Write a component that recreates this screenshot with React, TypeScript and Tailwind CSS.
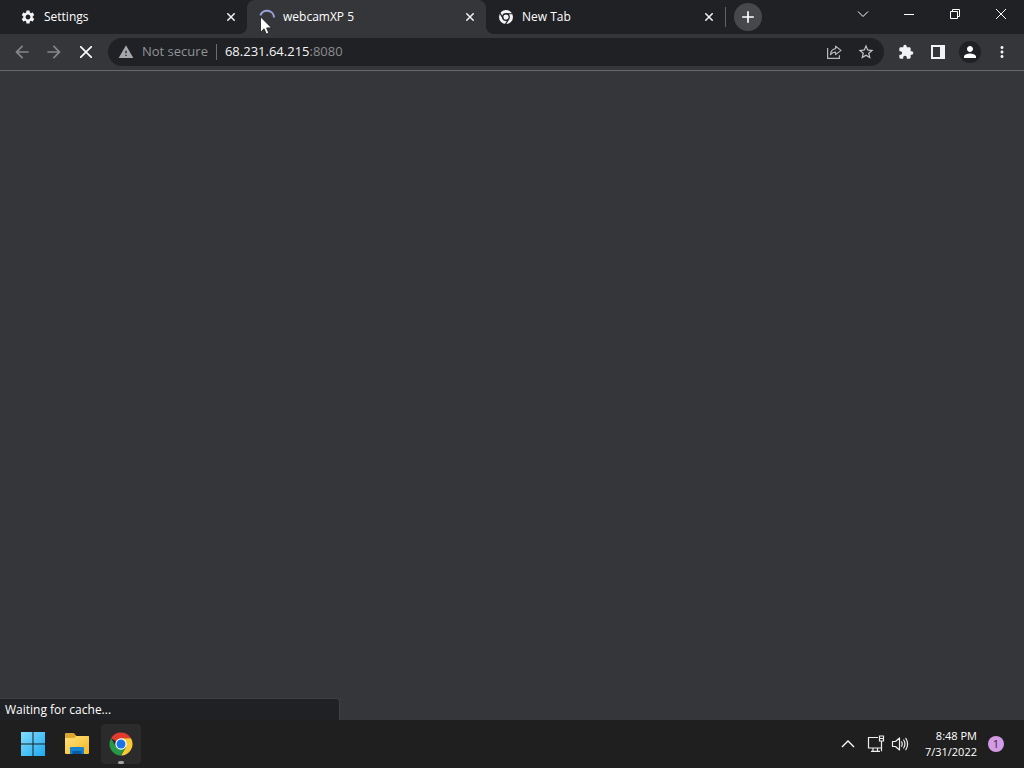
import type { ReactNode } from "react";
import {
  MdAdd,
  MdArrowBack,
  MdArrowForward,
  MdExtension,
  MdMoreVert,
  MdPerson,
  MdSettings,
  MdStarBorder,
  MdWarning,
} from "react-icons/md";

function ChromeMono() {
  return (
    <svg viewBox="0 0 24 24" className="size-4" aria-hidden="true">
      <circle cx="12" cy="12" r="10.5" fill="#f1f3f4" />
      <circle cx="12" cy="12" r="4.900" fill="none" stroke="#202124" strokeWidth="2" />
      <path
        d="M12 7.100h10M7.800 14.500 2.800 5.800M16.200 14.500l-5 8.600"
        stroke="#202124"
        strokeWidth="1.8"
        fill="none"
      />
    </svg>
  );
}

function Spinner() {
  return (
    <svg viewBox="0 0 16 16" className="size-4" aria-hidden="true">
      <path d="M1.400 6.400A7 7 0 0 1 15 8.600" fill="none" stroke="#9ba3dc" strokeWidth="2" />
    </svg>
  );
}

function Tab({ title, icon, active = false }: { title: string; icon: ReactNode; active?: boolean }) {
  return (
    <div
      className={
        active
          ? "relative z-10 flex h-full w-[239px] shrink-0 items-center gap-2 rounded-t-lg bg-[#35363a] pr-2 pl-3"
          : "flex h-full w-[239px] shrink-0 items-center gap-2 pr-2 pl-3"
      }
    >
      {active && (
        <>
          <span className="absolute bottom-0 -left-2 size-2 bg-[radial-gradient(circle_at_0_0,#202124_8px,#35363a_8px)]" />
          <span className="absolute -right-2 bottom-0 size-2 bg-[radial-gradient(circle_at_100%_0,#202124_8px,#35363a_8px)]" />
        </>
      )}
      <span className="flex size-4 items-center justify-center text-[#f1f3f4]">{icon}</span>
      <span className="flex-1 truncate text-xs">{title}</span>
      <button type="button" aria-label={`Close ${title}`} className="flex size-4 items-center justify-center">
        <svg viewBox="0 0 8 8" className="size-2" aria-hidden="true">
          <path d="m.3.3 7.400 7.400M7.700.3.3 7.700" stroke="#f1f3f4" strokeWidth="1.5" />
        </svg>
      </button>
    </div>
  );
}

function WindowButton({ label, children }: { label: string; children: ReactNode }) {
  return (
    <button type="button" aria-label={label} className="flex h-7 w-[46px] items-center justify-center">
      <svg viewBox="0 0 12 12" className="size-3" fill="none" stroke="#fff" strokeWidth="1" aria-hidden="true">
        {children}
      </svg>
    </button>
  );
}

function ToolButton({ label, children }: { label: string; children: ReactNode }) {
  return (
    <button type="button" aria-label={label} className="flex size-7 shrink-0 items-center justify-center">
      {children}
    </button>
  );
}

function TabStrip() {
  return (
    <header className="flex h-[34px] bg-[#202124] pl-2">
      <Tab title="Settings" icon={<MdSettings className="size-4" />} />
      <Tab title="webcamXP 5" icon={<Spinner />} active />
      <Tab title="New Tab" icon={<ChromeMono />} />
      <div className="flex items-center gap-2">
        <span className="h-5 w-px bg-[#5f6368]" />
        <button
          type="button"
          aria-label="New tab"
          className="flex size-7 items-center justify-center rounded-full bg-[#47484b]"
        >
          <MdAdd className="size-5" />
        </button>
      </div>
      <div className="ml-auto flex">
        <WindowButton label="Search tabs">
          <path d="m1 3.500 5 5 5-5" />
        </WindowButton>
        <WindowButton label="Minimize">
          <path d="M1 6.500h10" />
        </WindowButton>
        <WindowButton label="Restore">
          <path d="M1.500 3.500h7v7h-7zM3.500 3.500v-2h7v7h-2" />
        </WindowButton>
        <WindowButton label="Close">
          <path d="m1 1 10 10M11 1 1 11" />
        </WindowButton>
      </div>
    </header>
  );
}

function Toolbar() {
  return (
    <nav className="flex h-[37px] items-center border-b border-[#67686b] bg-[#35363a] pr-2 pl-2">
      <div className="flex gap-1">
        <ToolButton label="Back">
          <MdArrowBack className="size-5 text-[#85868a]" />
        </ToolButton>
        <ToolButton label="Forward">
          <MdArrowForward className="size-5 text-[#85868a]" />
        </ToolButton>
        <ToolButton label="Stop loading">
          <svg viewBox="0 0 12 12" className="size-3 text-white" aria-hidden="true">
            <path d="m0 0 12 12M12 0 0 12" stroke="currentColor" strokeWidth="1.6" />
          </svg>
        </ToolButton>
      </div>
      <div className="ml-2 flex h-7 flex-1 items-center rounded-full bg-[#202124] pr-1 pl-[10px] text-[13px]">
        <MdWarning className="size-4 text-[#a4a7ab]" />
        <span className="ml-2 text-[#909398]">Not secure</span>
        <span className="mx-2 h-4 w-px bg-[#6b6d71]" />
        <a href="http://68.231.64.215:8080" className="text-[#8b8d91]">
          <span className="text-[#f4f5f6]">68.231.64.215</span>:8080
        </a>
        <div className="ml-auto flex gap-1">
          <ToolButton label="Share this page">
            <svg viewBox="0 0 16 16" className="size-4" fill="none" stroke="#b4b7bb" strokeWidth="1.2" aria-hidden="true">
              <path d="M1.600 4v10.400h11.800v-3.200" />
              <path d="M9.600 2.200 15 6.400l-5.400 4.200V8.200C7.500 8.200 5.800 8.900 4.500 10.500 4.800 7.400 6.600 5 9.600 4.600z" strokeLinejoin="round" />
            </svg>
          </ToolButton>
          <ToolButton label="Bookmark this tab">
            <MdStarBorder className="size-[18px] text-[#c4c7cb]" />
          </ToolButton>
        </div>
      </div>
      <div className="ml-2 flex gap-1 text-[#f1f3f4]">
        <ToolButton label="Extensions">
          <MdExtension className="size-4" />
        </ToolButton>
        <ToolButton label="Side panel">
          <svg viewBox="0 0 14 14" className="size-[14px]" aria-hidden="true">
            <path d="M0 0h14v14H0zM2 2v10h7V2z" fill="currentColor" fillRule="evenodd" />
          </svg>
        </ToolButton>
        <ToolButton label="Profile">
          <span className="flex size-[22px] items-center justify-center rounded-full bg-[#202124]">
            <MdPerson className="size-[18px] text-white" />
          </span>
        </ToolButton>
        <ToolButton label="Menu">
          <MdMoreVert className="size-[18px]" />
        </ToolButton>
      </div>
    </nav>
  );
}

function WindowsLogo() {
  return (
    <svg viewBox="0 0 24 24" className="size-6" aria-hidden="true">
      <defs>
        <linearGradient id="win" x1="0" y1="0" x2="24" y2="24" gradientUnits="userSpaceOnUse">
          <stop stopColor="#83dcfb" />
          <stop offset="1" stopColor="#1caaf1" />
        </linearGradient>
      </defs>
      <path d="M0 0h11.500v11.500H0zM12.500 0H24v11.500H12.500zM0 12.500h11.500V24H0zM12.500 12.500H24V24H12.500z" fill="url(#win)" />
    </svg>
  );
}

function FolderLogo() {
  return (
    <svg viewBox="0 0 26 24" className="h-6 w-[26px]" aria-hidden="true">
      <defs>
        <linearGradient id="folder" x1="0" y1="0" x2="1" y2="1">
          <stop stopColor="#ffe17c" />
          <stop offset="1" stopColor="#f4b927" />
        </linearGradient>
      </defs>
      <path d="M1 2q0-1 1-1h7q1 0 1.600.8L12.500 4H24q1 0 1 1v5H1z" fill="#dda62c" />
      <path d="M1 6h8.500q1 0 1.700-.8l1-1.200H24q1 0 1 1v16q0 1-1 1H2q-1 0-1-1z" fill="url(#folder)" />
      <path d="M6 22v-6q0-1 1-1h12q1 0 1 1v6z" fill="#1683cf" />
      <path d="M8.500 22v-2.500q0-.5.5-.5h8q.5 0 .5.500V22z" fill="#075b9f" />
    </svg>
  );
}

function ChromeLogo() {
  return (
    <svg viewBox="0 0 24 24" className="size-6" aria-hidden="true">
      <path d="M12 12 2.040 6.250A11.500 11.500 0 0 1 21.960 6.250H12z" fill="#e33b2e" />
      <path d="M12 6.250h9.960A11.500 11.500 0 0 1 12 23.500l4.980-8.625z" fill="#fcc934" />
      <path d="m16.980 14.875L12 23.500A11.500 11.500 0 0 1 2.040 6.250l4.980 8.625z" fill="#279847" />
      <circle cx="12" cy="12" r="5.750" fill="#fff" />
      <circle cx="12" cy="12" r="4.500" fill="#1a73e8" />
    </svg>
  );
}

function Taskbar() {
  return (
    <footer className="flex h-12 items-center justify-between bg-[#1f1f1f] pr-5 pl-[13px]">
      <div className="flex gap-1">
        <button type="button" aria-label="Start" className="flex size-10 items-center justify-center">
          <WindowsLogo />
        </button>
        <button type="button" aria-label="File Explorer" className="flex size-10 items-center justify-center">
          <FolderLogo />
        </button>
        <button
          type="button"
          aria-label="Google Chrome"
          className="relative flex size-10 items-center justify-center rounded bg-[#2b2b2b]"
        >
          <ChromeLogo />
          <span className="absolute bottom-0 left-[17px] h-[3px] w-1.5 rounded-full bg-[#a3a3a3]" />
        </button>
      </div>
      <div className="flex items-center">
        <button type="button" aria-label="Show hidden icons" className="mr-3">
          <svg viewBox="0 0 14 14" className="size-3.5" fill="none" stroke="#fff" strokeWidth="1.3" aria-hidden="true">
            <path d="m1 10 6-6 6 6" />
          </svg>
        </button>
        <button type="button" aria-label="Network and volume" className="mr-4 flex items-center gap-1.5">
          <svg viewBox="0 0 18 18" className="size-[18px]" fill="none" stroke="#eee" strokeWidth="1.2" aria-hidden="true">
            <path d="M11 2.500H1.500v10.500h12.500M6 13v3M10.500 13v3M4 16.300h9" />
            <path d="M12.500 1h4v5h-4zM12.500 3.500h4M14.500 6v10.300" />
          </svg>
          <svg viewBox="0 0 18 18" className="size-[18px]" fill="none" stroke="#eee" strokeWidth="1.2" aria-hidden="true">
            <path d="M1.500 6.500h3L8.500 3v12l-4-3.500h-3z" strokeLinejoin="round" />
            <path d="M10.600 6.800q1.300 2.200 0 4.400M12.700 5q2.500 4 0 8M14.800 3.300q3.600 5.700 0 11.400" strokeLinecap="round" />
          </svg>
        </button>
        <div className="text-right text-[11px] leading-4">
          <time className="block">8:48 PM</time>
          <time className="block">7/31/2022</time>
        </div>
        <button
          type="button"
          aria-label="1 notification"
          className="ml-[11px] flex size-4 items-center justify-center rounded-full bg-[#d49be5] text-[11px] leading-4 text-[#35223c]"
        >
          1
        </button>
      </div>
    </footer>
  );
}

function Cursor() {
  return (
    <svg
      viewBox="0 0 12 19"
      className="pointer-events-none absolute top-4 left-[260px] z-20 h-[19px] w-3"
      aria-hidden="true"
    >
      <path
        d="M.5.8v15.400l3.600-3.400 2.200 5.300 2.500-1.100-2.200-5.100h4.900z"
        fill="#fff"
        stroke="#17181a"
        strokeWidth=".8"
      />
    </svg>
  );
}

export default function App() {
  return (
    <div className="relative flex min-h-screen flex-col bg-[#35363a] font-['Open_Sans','Noto_Sans',sans-serif] text-white">
      <TabStrip />
      <Toolbar />
      <main className="flex flex-1 flex-col justify-end">
        <div
          role="status"
          className="flex h-[22px] w-[340px] max-w-full items-center rounded-tr-sm border-t border-r border-[#3e3f43] bg-[#202124] px-[5px] text-xs"
        >
          Waiting for cache...
        </div>
      </main>
      <Taskbar />
      <Cursor />
    </div>
  );
}
